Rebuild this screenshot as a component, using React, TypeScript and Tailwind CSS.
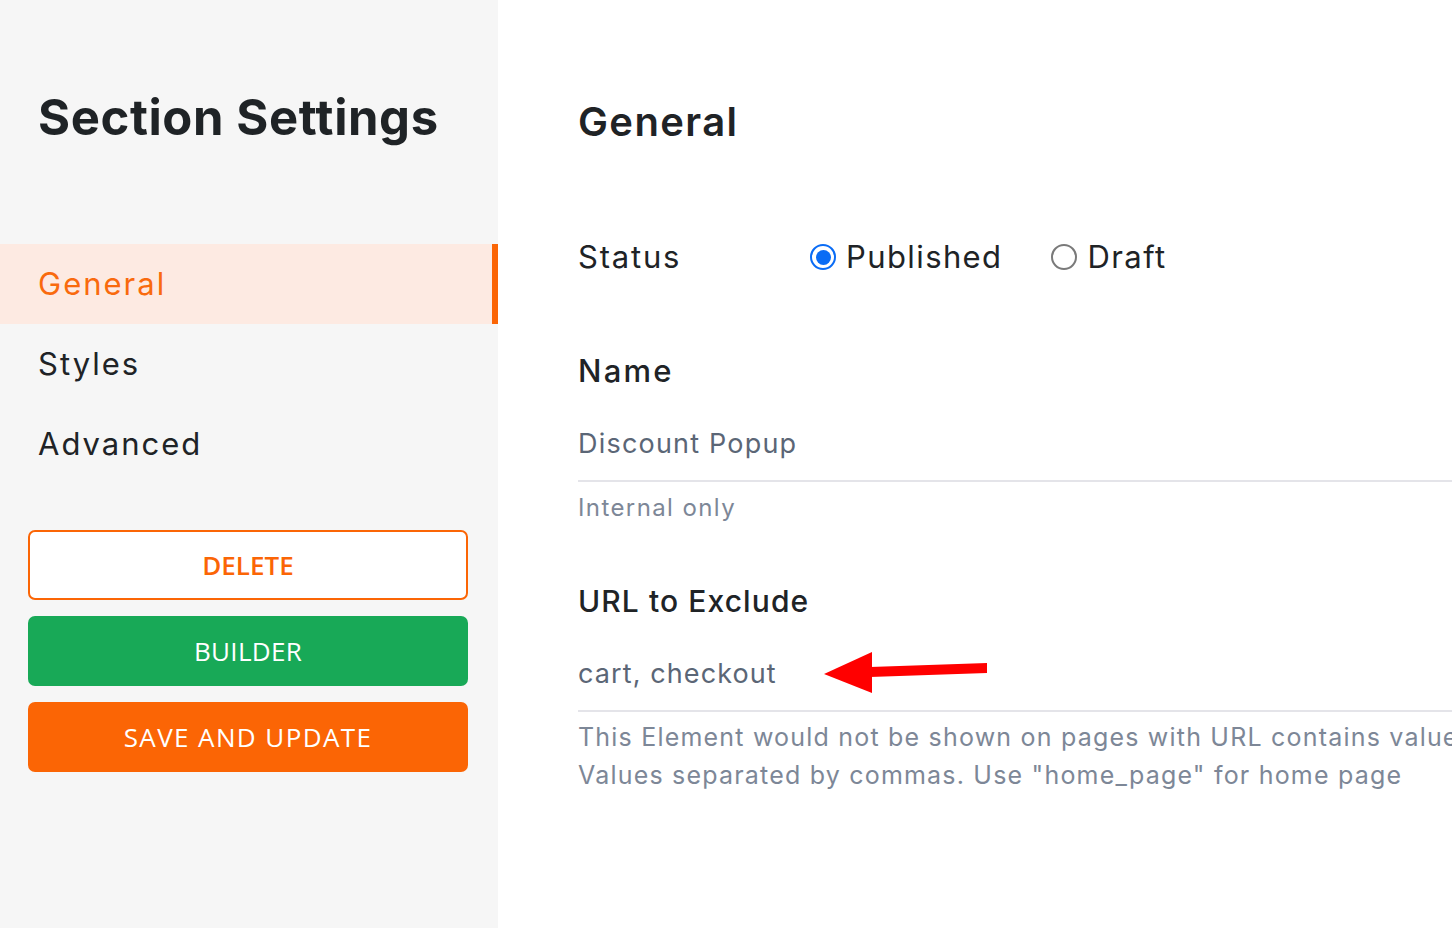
import { useState } from 'react';

const navItems = ['General', 'Styles', 'Advanced'];

function Radio({ checked, label, onClick }: { checked: boolean; label: string; onClick: () => void }) {
  return (
    <button type="button" onClick={onClick} className="flex items-center gap-[10px]">
      <span
        className={
          'flex h-[26px] w-[26px] items-center justify-center rounded-full ' +
          (checked ? 'border-[2.5px] border-[#0a6cf5]' : 'border-[2px] border-[#7a7a7a]')
        }
      >
        {checked && <span className="h-[15px] w-[15px] rounded-full bg-[#0a6cf5]" />}
      </span>
      <span className="text-[31px] tracking-[1.4px] text-[#202326]">{label}</span>
    </button>
  );
}

export default function App() {
  const [active, setActive] = useState('General');
  const [status, setStatus] = useState('published');

  return (
    <div className="flex h-[928px] w-[1452px] overflow-hidden bg-white font-['Inter',sans-serif]">
      <aside className="w-[498px] shrink-0 bg-[#f6f6f6] pt-[89px]">
        <h1 className="flex h-[58px] items-center pl-[38px] text-[49px] font-bold tracking-[0.6px] text-[#1f2326]">
          Section Settings
        </h1>

        <nav className="mt-[97px]">
          {navItems.map((item) => (
            <div
              key={item}
              onClick={() => setActive(item)}
              className={
                'flex h-[80px] cursor-pointer items-center pl-[38px] text-[31px] tracking-[2px] ' +
                (active === item
                  ? 'border-r-[6px] border-[#fb6505] bg-[#fdeae2] text-[#f96a0e]'
                  : 'text-[#202326]')
              }
            >
              {item}
            </div>
          ))}
        </nav>

        <div className="mt-[46px] flex w-[468px] flex-col gap-[16px] pl-[28px] font-['Open_Sans',sans-serif] text-[26px]">
          <button
            type="button"
            className="h-[70px] rounded-[7px] border-2 border-[#fb6505] bg-white font-semibold text-[#fb6505]"
          >
            DELETE
          </button>
          <button type="button" className="h-[70px] rounded-[7px] bg-[#18a957] font-medium tracking-[0.3px] text-white">
            BUILDER
          </button>
          <button type="button" className="h-[70px] rounded-[7px] bg-[#fb6505] font-medium tracking-[1.4px] text-white">
            SAVE AND UPDATE
          </button>
        </div>
      </aside>

      <main className="relative min-w-0 flex-1 overflow-hidden pl-[80px] pt-[98px]">
        <h2 className="flex h-[48px] items-center text-[40px] font-semibold tracking-[1.4px] text-[#1f2326]">
          General
        </h2>

        <div className="mt-[86px] flex h-[50px] items-center">
          <span className="w-[232px] text-[31px] tracking-[1.8px] text-[#202326]">Status</span>
          <div className="flex items-center gap-[49px]">
            <Radio checked={status === 'published'} label="Published" onClick={() => setStatus('published')} />
            <Radio checked={status === 'draft'} label="Draft" onClick={() => setStatus('draft')} />
          </div>
        </div>

        <div className="mt-[69px] flex h-[40px] items-center text-[31px] font-medium tracking-[2.2px] text-[#202326]">
          Name
        </div>
        <div className="mt-[17px] flex h-[74px] w-[1000px] items-center border-b-2 border-[#e4e4e9] text-[27px] tracking-[1.2px] text-[#5b6676]">
          Discount Popup
        </div>
        <div className="mt-[8px] flex h-[36px] items-center text-[24px] tracking-[1.4px] text-[#7d8797]">
          Internal only
        </div>

        <div className="mt-[55px] flex h-[40px] items-center text-[30px] font-medium tracking-[1.1px] text-[#202326]">
          URL to Exclude
        </div>
        <div className="mt-[17px] flex h-[74px] w-[1000px] items-center border-b-2 border-[#e4e4e9] text-[27px] tracking-[1.1px] text-[#5b6676]">
          cart, checkout
        </div>
        <p className="mt-[6px] whitespace-nowrap text-[25px] leading-[38px] tracking-[1.2px] text-[#7d8797]">
          This Element would not be shown on pages with URL contains value from this field.
          <br />
          Values separated by commas. Use "home_page" for home page
        </p>

        <svg
          className="absolute left-[326px] top-[652px]"
          width="166"
          height="42"
          viewBox="0 0 166 42"
        >
          <polygon points="0,22 48,0 48,41" fill="#ff0000" />
          <polygon points="46,15 163,11 163,21 46,25" fill="#ff0000" />
        </svg>
      </main>
    </div>
  );
}
